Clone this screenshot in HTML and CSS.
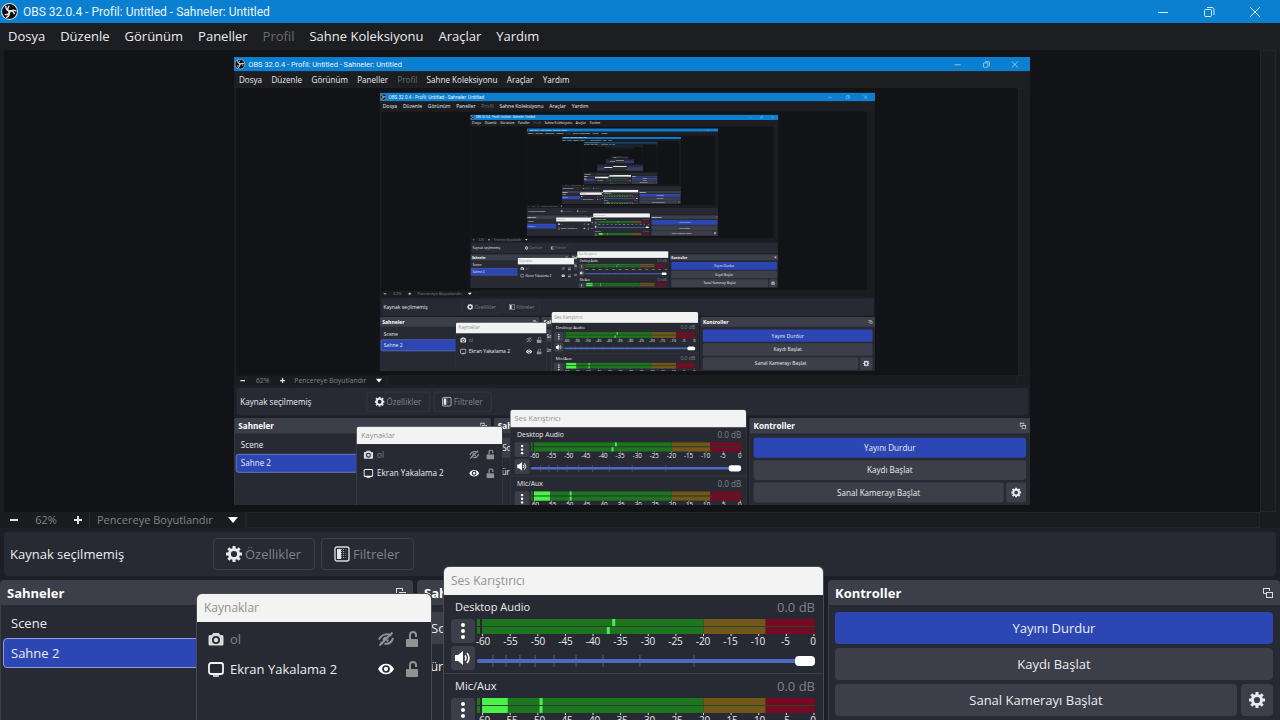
FILE: index.html
```html
<!DOCTYPE html>
<html lang="tr">
<head>
    <meta charset="UTF-8">
    <meta name="viewport" content="width=device-width, initial-scale=1.0">
    <title>OBS 32.0.4 - Profil: Untitled - Sahneler: Untitled</title>
    <link rel="stylesheet" href="styles.css">
</head>
<body>
    <div class="obs">
        <header class="titlebar">
            <svg class="logo" viewBox="0 0 32 32">
                <circle cx="16" cy="16" r="15" fill="#0c0c0e" stroke="#d5dde3" stroke-width="2"/>
                <g fill="none" stroke="#e4e6e8" stroke-width="2.6" stroke-linecap="round">
                    <path d="M9 6c0 5 2 8 7 9 4-1 7 0 9 5"/>
                    <path d="M9 6c0 5 2 8 7 9 4-1 7 0 9 5" transform="rotate(120 16 16)"/>
                    <path d="M9 6c0 5 2 8 7 9 4-1 7 0 9 5" transform="rotate(240 16 16)"/>
                </g>
            </svg>
            <span class="title">OBS 32.0.4 - Profil: Untitled - Sahneler: Untitled</span>
            <button class="win-btn" aria-label="Simge durumuna küçült">
                <svg viewBox="0 0 12 12"><path d="M1 6.500h10"/></svg>
            </button>
            <button class="win-btn" aria-label="Önceki boyut">
                <svg viewBox="0 0 12 12"><rect x="1.500" y="3.500" width="7" height="7" rx="1"/><path d="M4 1.500h5a2 2 0 0 1 2 2V9"/></svg>
            </button>
            <button class="win-btn" aria-label="Kapat">
                <svg viewBox="0 0 12 12"><path d="M1 1l10 10M11 1L1 11"/></svg>
            </button>
        </header>

        <nav class="menubar">
            <button>Dosya</button>
            <button>Düzenle</button>
            <button>Görünüm</button>
            <button>Paneller</button>
            <button disabled>Profil</button>
            <button>Sahne Koleksiyonu</button>
            <button>Araçlar</button>
            <button>Yardım</button>
        </nav>

        <main class="preview">
            <div class="canvas"><div class="capture"></div></div>
            <div class="scroll-y"></div>
            <div class="zoombar">
                <button class="zoom-btn" aria-label="Uzaklaştır"><svg viewBox="0 0 8 8"><path d="M0 4h8"/></svg></button>
                <span class="zoom-value">62%</span>
                <button class="zoom-btn" aria-label="Yakınlaştır"><svg viewBox="0 0 8 8"><path d="M0 4h8M4 0v8"/></svg></button>
                <label class="zoom-mode">
                    <select aria-label="Önizleme ölçeği"><option>Pencereye Boyutlandır</option></select>
                </label>
                <div class="scroll-x"></div>
            </div>
        </main>

        <section class="context">
            <span class="context-label">Kaynak seçilmemiş</span>
            <button>
                <svg class="icon gear" viewBox="0 0 16 16"><circle cx="8" cy="8" r="4.600"/><path d="M8 0v3M8 13v3M0 8h3M13 8h3M2.300 2.300l2.200 2.200M11.500 11.500l2.200 2.200M13.700 2.300l-2.200 2.200M4.500 11.500l-2.200 2.200"/></svg>
                Özellikler
            </button>
            <button>
                <svg class="icon" viewBox="0 0 16 16"><rect x="1" y="1" width="14" height="14" rx="2" fill="none" stroke="#d6d7da" stroke-width="1.400"/><path d="M3 3h4v10H3z" fill="#e6e7ea"/><path d="M7.500 3v10M9.500 3v10" stroke="#a4a6ab" stroke-dasharray="1 1"/><path d="M11.500 3v10" stroke="#5c5f67" stroke-dasharray="1 1"/></svg>
                Filtreler
            </button>
        </section>

        <div class="docks">
            <section class="dock">
                <h2 class="dock-title">Sahneler
                    <button aria-label="Sahneler panelini ayır"><svg viewBox="0 0 12 12"><path d="M4 6.500H1.500v-5h6V4"/><path d="M1 1.500h7M5 5.500h6"/><rect x="4.500" y="5.500" width="6" height="5"/></svg></button>
                </h2>
                <div class="scenes">
                    <button>Scene</button>
                    <button class="selected">Sahne 2</button>
                </div>
            </section>

            <section class="dock">
                <h2 class="dock-title">Sahne Geçişleri</h2>
                <div class="transitions">
                    <select aria-label="Geçiş"><option>Soldur</option></select>
                    <label>Süre <input type="text" value="300 ms"></label>
                </div>
            </section>

            <section class="dock">
                <h2 class="dock-title">Kontroller
                    <button aria-label="Kontroller panelini ayır"><svg viewBox="0 0 12 12"><path d="M4 6.500H1.500v-5h6V4"/><path d="M1 1.500h7M5 5.500h6"/><rect x="4.500" y="5.500" width="6" height="5"/></svg></button>
                </h2>
                <div class="controls">
                    <button class="primary">Yayını Durdur</button>
                    <button>Kaydı Başlat</button>
                    <div class="control-row">
                        <button>Sanal Kamerayı Başlat</button>
                        <button class="square" aria-label="Sanal kamera ayarları">
                            <svg class="icon gear" viewBox="0 0 16 16"><circle cx="8" cy="8" r="4.600"/><path d="M8 0v3M8 13v3M0 8h3M13 8h3M2.300 2.300l2.200 2.200M11.500 11.500l2.200 2.200M13.700 2.300l-2.200 2.200M4.500 11.500l-2.200 2.200"/></svg>
                        </button>
                    </div>
                </div>
            </section>
        </div>

        <!-- floating docks -->
        <section class="floating sources">
            <h2 class="floating-title">Kaynaklar</h2>
            <ul>
                <li class="off">
                    <svg class="icon" viewBox="0 0 16 16"><path fill="#d9dadd" fill-rule="evenodd" d="M5 2h6l1 2h2a1.500 1.500 0 0 1 1.500 1.500V13a1.500 1.500 0 0 1-1.500 1.500H2A1.500 1.500 0 0 1 .500 13V5.500A1.500 1.500 0 0 1 2 4h2zM8 5a4 4 0 1 0 0 8 4 4 0 0 0 0-8zm0 1.800a2.200 2.200 0 1 1 0 4.400 2.200 2.200 0 0 1 0-4.400z"/></svg>
                    <span>ol</span>
                    <button aria-label="Göster"><svg class="icon" viewBox="0 0 16 16" fill="none" stroke="#929398"><path d="M1 8.500c3-6 10-6.500 12-3.500M3 11c.500.800 1 1.200 2 1.600M15 7c-1 5-5.500 6.500-8.500 5.500" stroke-width="2"/><path d="M5.500 9.500c0-2 1-3 3-3M10 8.500c0 1-.500 1.500-1.500 1.800M14.500 1.500l-13 13" stroke-width="1.800"/></svg></button>
                    <button aria-label="Kilitle"><svg class="icon" viewBox="0 0 16 16"><path d="M6 8V4a3 3 0 0 1 6 0v2" fill="none" stroke="#929292" stroke-width="2"/><rect x="2" y="8" width="12" height="8" rx="1" fill="#929292"/></svg></button>
                </li>
                <li>
                    <svg class="icon" viewBox="0 0 16 16"><rect x="1" y="2" width="14" height="11" rx="2" fill="none" stroke="#f2f2f3" stroke-width="1.800"/><path d="M5 15h6" stroke="#f2f2f3" stroke-width="1.500"/></svg>
                    <span>Ekran Yakalama 2</span>
                    <button aria-label="Gizle"><svg class="icon" viewBox="0 0 16 16"><path d="M0 8c3.500-7 12.500-7 16 0-3.500 7-12.500 7-16 0z" fill="#fefefe"/><circle cx="8" cy="8" r="3" fill="none" stroke="#272a33" stroke-width="1.700"/></svg></button>
                    <button aria-label="Kilitle"><svg class="icon" viewBox="0 0 16 16"><path d="M6 8V4a3 3 0 0 1 6 0v2" fill="none" stroke="#929292" stroke-width="2"/><rect x="2" y="8" width="12" height="8" rx="1" fill="#929292"/></svg></button>
                </li>
            </ul>
        </section>

        <section class="floating mixer">
            <h2 class="floating-title">Ses Karıştırıcı</h2>
            <div class="channel" data-peaks="40,38.400" data-level="0">
                <div class="channel-head"><span>Desktop Audio</span><span class="db">0.0 dB</span></div>
                <div class="channel-body">
                    <button class="side-btn" aria-label="Desktop Audio seçenekleri"><svg viewBox="0 0 16 16"><circle cx="8" cy="2" r="2"/><circle cx="8" cy="8" r="2"/><circle cx="8" cy="14" r="2"/></svg></button>
                    <div class="meter"></div>
                    <button class="side-btn" aria-label="Sessize al"><svg viewBox="0 0 16 16"><path d="M0 5h3l5-4v14l-5-4H0z"/><path d="M10 5.500q1.800 2.500 0 5M12 3q4 5 0 10" fill="none" stroke="#fefefe" stroke-width="1.600"/></svg></button>
                    <div class="fader">
                        <svg class="fader-ticks"></svg>
                        <input type="range" min="0" max="100" value="100" aria-label="Desktop Audio ses düzeyi">
                    </div>
                </div>
            </div>
            <div class="channel" data-peaks="18.500,18.500" data-level="7.600">
                <div class="channel-head"><span>Mic/Aux</span><span class="db">0.0 dB</span></div>
                <div class="channel-body">
                    <button class="side-btn" aria-label="Mic/Aux seçenekleri"><svg viewBox="0 0 16 16"><circle cx="8" cy="2" r="2"/><circle cx="8" cy="8" r="2"/><circle cx="8" cy="14" r="2"/></svg></button>
                    <div class="meter"></div>
                </div>
            </div>
        </section>
    </div>

    <script src="script.js"></script>
</body>
</html>
```
FILE: styles.css
```css
*, *::before, *::after {
    box-sizing: border-box;
}

:root {
    --base: #1e1f26;
    --panel: #272a33;
    --raised: #3c3e4a;
    --accent: #2c47b4;
    --text: #ebecef;
    --muted: #808289;
    --scale: 0.62;
}

body {
    margin: 0;
    overflow: hidden;
    background-color: var(--base);
    font: 13px/20px "Open Sans", "Noto Sans", sans-serif;
    color: var(--text);
}

button, select, input {
    margin: 0;
    padding: 0;
    border: none;
    background: none;
    font: inherit;
    color: inherit;
}

h2, ul {
    margin: 0;
    padding: 0;
    list-style: none;
}

svg {
    display: block;
}

.obs {
    position: relative;
    display: flex;
    flex-direction: column;
    width: 100vw;
    height: 100vh;
    overflow: hidden;
    background-color: var(--base);
}

.icon {
    flex: none;
    width: 16px;
    height: 16px;
}

.gear {
    fill: none;
    stroke: #e8e9ec;
    stroke-width: 3;
}

/* title and menu */

.titlebar {
    display: flex;
    flex: none;
    align-items: center;
    height: 23px;
    padding: 0 2px 0 1px;
    background-color: #0b7fd0;
    font-family: Roboto, "Open Sans", sans-serif;
    font-size: 12px;
    color: #e8f4fc;
}

.logo {
    width: 17px;
    height: 17px;
    margin-right: 5px;
}

.title {
    flex: 1;
}

.win-btn {
    display: flex;
    align-items: center;
    justify-content: center;
    width: 46px;
    height: 23px;
}

.win-btn svg {
    width: 12px;
    height: 12px;
    fill: none;
    stroke: #d9eefa;
}

.menubar {
    display: flex;
    flex: none;
    gap: 15px;
    height: 27px;
    padding: 0 8px 2px;
    background-color: #1d1e22;
}

.menubar button:disabled {
    color: #6b6c70;
}

/* preview */

.preview {
    display: grid;
    flex: 1;
    grid-template-columns: 1fr 16px;
    grid-template-rows: 1fr 16px;
    min-height: 0;
    padding: 0 4px;
    background-color: #1b1c20;
}

.canvas {
    display: flex;
    align-items: center;
    justify-content: center;
    min-width: 0;
    min-height: 0;
    background-color: #121317;
}

.capture {
    flex: none;
    width: calc(100vw * var(--scale));
    height: calc(100vh * var(--scale));
    overflow: hidden;
}

.capture > .obs {
    transform: scale(var(--scale));
    transform-origin: 0 0;
}

.scroll-y {
    border: 1px solid #24252a;
}

.zoombar {
    display: flex;
    align-items: center;
    font-size: 11px;
    line-height: 16px;
    color: var(--muted);
}

.zoom-btn {
    display: flex;
    justify-content: center;
    width: 20px;
}

.zoom-btn svg {
    width: 8px;
    height: 8px;
    stroke: #e4e5e8;
    stroke-width: 2;
}

.zoom-value {
    width: 44px;
    text-align: center;
}

.zoom-mode {
    display: flex;
    align-items: center;
    margin-left: 1px;
    border-left: 1px solid #26272c;
    border-right: 1px solid #26272c;
}

.zoom-mode::after {
    content: "";
    margin: 0 7px 0 15px;
    border: 5px solid transparent;
    border-top: 6px solid #fefefe;
    border-bottom: 0;
}

.zoom-mode select {
    height: 16px;
    padding-left: 7px;
    appearance: none;
}

.scroll-x {
    flex: 1;
    height: 16px;
    border: 1px solid #24252a;
}

/* source toolbar */

.context {
    display: flex;
    flex: none;
    align-items: center;
    gap: 6px;
    height: 44px;
    margin: 4px;
    padding: 0 6px;
    border-radius: 4px;
    background-color: var(--panel);
}

.context-label {
    width: 197px;
}

.context button {
    display: flex;
    align-items: center;
    gap: 3px;
    height: 32px;
    padding: 0 13px 0 12px;
    border: 1px solid var(--raised);
    border-radius: 4px;
    color: var(--muted);
}

/* docks */

.docks {
    display: grid;
    flex: none;
    grid-template-columns: 413fr 407fr 452fr;
    gap: 4px;
    height: 140px;
}

.dock {
    min-width: 0;
    overflow: hidden;
    border-left: 1px solid var(--raised);
    border-radius: 4px 4px 0 0;
    background-color: var(--panel);
}

.dock-title {
    display: flex;
    align-items: center;
    justify-content: space-between;
    height: 25px;
    padding: 0 6px;
    background-color: var(--raised);
    font-size: 13px;
    font-weight: bold;
    color: #fefefe;
}

.dock-title svg {
    width: 12px;
    height: 12px;
    fill: none;
    stroke: #dcdde0;
}

.scenes {
    display: flex;
    flex-direction: column;
    padding: 3px 2px;
}

.scenes button {
    height: 30px;
    padding: 0 7px 1px;
    border: 1px solid transparent;
    border-radius: 4px;
    text-align: left;
}

.scenes .selected {
    border-color: #8c9ce0;
    background-color: var(--accent);
}

.transitions {
    display: flex;
    flex-direction: column;
    gap: 6px;
    padding: 7px 5px;
}

.transitions select, .transitions input {
    height: 32px;
    padding: 0 8px;
    border-radius: 4px;
    background-color: var(--raised);
    appearance: none;
}

.transitions label {
    display: flex;
    align-items: center;
    gap: 8px;
}

.controls {
    display: flex;
    flex-direction: column;
    gap: 4px;
    padding: 7px 7px 4px 6px;
}

.controls button {
    flex: 1 0 32px;
    border-radius: 4px;
    background-color: var(--raised);
}

.controls .primary {
    background-color: var(--accent);
}

.control-row {
    display: flex;
    gap: 4px;
    height: 32px;
}

.control-row .square {
    display: flex;
    flex: 0 0 32px;
    align-items: center;
    justify-content: center;
}

/* floating windows */

.floating {
    position: absolute;
    bottom: 0;
    overflow: hidden;
    border: 1px solid #474953;
    border-bottom: none;
    border-radius: 6px 6px 0 0;
    background-color: var(--panel);
}

.floating-title {
    height: 28px;
    padding: 0 7px;
    background-color: #f3f3f3;
    font-size: 12px;
    font-weight: normal;
    line-height: 27px;
    color: #919191;
}

.sources {
    left: 196px;
    width: 236px;
    height: 127px;
}

.sources li {
    display: flex;
    align-items: center;
    gap: 6px;
    height: 30px;
    padding: 0 11px;
}

.sources ul {
    padding-top: 2px;
}

.sources span {
    flex: 1;
}

.sources li button + button {
    margin-left: 4px;
}

.off {
    color: var(--muted);
}

.mixer {
    left: 443px;
    width: 381px;
    height: 154px;
}

.channel {
    height: 79px;
    padding: 0 8px 0 7px;
    border-bottom: 1px solid var(--raised);
}

.channel-head {
    display: flex;
    align-items: center;
    justify-content: space-between;
    height: 24px;
    padding-left: 4px;
    font-size: 11px;
}

.channel-head .db {
    font-size: 13px;
    color: var(--muted);
}

.channel-body {
    display: grid;
    grid-template-columns: 24px 1fr;
    column-gap: 2px;
}

.side-btn {
    display: flex;
    align-items: center;
    justify-content: center;
    height: 24px;
    border-radius: 4px;
    background-color: var(--raised);
}

.side-btn svg {
    width: 16px;
    height: 16px;
    fill: #fefefe;
}

.meter svg {
    width: 100%;
    height: 17px;
}

.scale {
    display: flex;
    justify-content: space-between;
    margin-left: -4px;
    margin-right: -8px;
    font-size: 10px;
    line-height: 10px;
}

.scale span {
    width: 20px;
    text-align: center;
}

.fader {
    position: relative;
    display: flex;
    align-items: center;
    height: 30px;
}

.fader-ticks {
    position: absolute;
    width: 100%;
    height: 12px;
    stroke: #5b5e69;
}

.fader input {
    position: relative;
    width: 100%;
    height: 10px;
    appearance: none;
}

.fader input::-webkit-slider-runnable-track {
    height: 4px;
    border-radius: 2px;
    background-color: #5068c4;
}

.fader input::-webkit-slider-thumb {
    width: 20px;
    height: 10px;
    margin-top: -3px;
    border-radius: 4px;
    background-color: #fefefe;
    appearance: none;
}
```
FILE: script.js
```js
const CAPTURE_DEPTH = 9;
const CAPTURE_MARGIN = 7;
const FADER_TICKS = [4.7, 8.6, 12.7, 17.2, 22.8, 29.3, 37.3, 48.2, 64.2];

const obs = document.querySelector(".obs");

function rect(x, width, y, height, fill) {
    return `<rect x="${x}%" width="${width}%" y="${y}" height="${height}" fill="${fill}"/>`;
}

function drawMeter(channel) {
    const peaks = channel.dataset.peaks.split(",").map(Number);
    const level = Number(channel.dataset.level);
    let bars = "";
    let labels = "";

    peaks.forEach((peak, i) => {
        const y = i * 8;
        bars += rect(0, 0.9, y, 7, "#1f741f");
        bars += rect(1.5, 65.5, y, 7, "#1f741f");
        bars += rect(67, 18.4, y, 7, "#72561a");
        bars += rect(85.4, 14.6, y, 7, "#760a25");
        bars += rect(1.5, level, y, 7, "#4cf04c");
        bars += rect(peak, 0.9, y, 7, "#4ce85a");
    });
    bars += rect(1.5, 98.5, 7, 1, "#1d4a24");

    for (let i = 0; i <= 12; i++) {
        bars += rect(1.5 + i * 8.17, 0.3, 15, 2, "#dddddd");
        labels += `<span>${i * 5 - 60}</span>`;
    }

    channel.querySelector(".meter").innerHTML = `<svg>${bars}</svg><div class="scale">${labels}</div>`;
}

document.querySelectorAll(".channel").forEach(drawMeter);

document.querySelector(".fader-ticks").innerHTML = FADER_TICKS
    .map(x => `<line x1="${x}%" x2="${x}%" y1="0" y2="12"/>`)
    .join("");

// the display capture shows the window itself, level inside level
const source = obs.cloneNode(true);
let picture = source.cloneNode(true);

for (let i = 1; i < CAPTURE_DEPTH; i++) {
    const outer = source.cloneNode(true);
    outer.querySelector(".capture").append(picture);
    picture = outer;
}

picture.inert = true;
obs.querySelector(".capture").append(picture);

function fitCapture() {
    const canvas = obs.querySelector(".canvas");
    const scale = (canvas.clientHeight - CAPTURE_MARGIN * 2) / window.innerHeight;
    document.documentElement.style.setProperty("--scale", scale);
}

window.addEventListener("resize", fitCapture);
fitCapture();
```
